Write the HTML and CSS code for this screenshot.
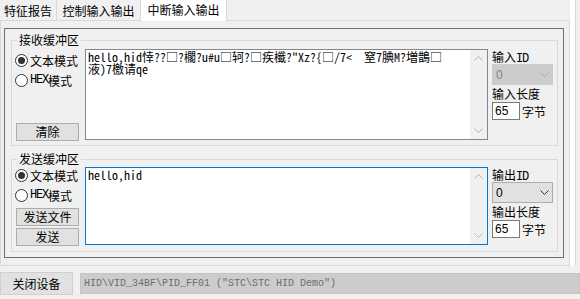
FILE: index.html
```html
<!DOCTYPE html>
<html>
<head>
<meta charset="utf-8">
<link rel="stylesheet" href="styles.css">
</head>
<body>
<div class="window">
  <div class="top">
    <div class="tabctl">
      <div class="tabs">
        <div class="tab t1">特征报告</div>
        <div class="tab t2">控制输入输出</div>
        <div class="tab active">中断输入输出</div>
        <div class="tabfill"></div>
      </div>
      <div class="page">
        <div class="frame">
          <div class="group g-recv">
            <div class="legend">接收缓冲区</div>
            <div class="leftcol">
              <div class="radio"><span class="dot checked"></span>文本模式</div>
              <div class="radio"><span class="dot"></span><span class="lat">HEX</span>模式</div>
              <div class="btn btn-bottom">清除</div>
            </div>
            <div class="textbox recv">
              <div class="text">hello,hid悻??□?櫊?u#u□轲?□疾櫼?"Xz?{□/7&lt;  窒7腆M?増鵲□
液)7檄请qe</div>
              <div class="vscroll">
                <div class="arrow"><svg width="9" height="5" viewBox="0 0 9 5"><path d="M0.5 4.5 L4.5 0.5 L8.5 4.5" fill="none" stroke="#b4b4b4" stroke-width="1"/></svg></div>
                <div class="arrow"><svg width="9" height="5" viewBox="0 0 9 5"><path d="M0.5 0.5 L4.5 4.5 L8.5 0.5" fill="none" stroke="#b4b4b4" stroke-width="1"/></svg></div>
              </div>
            </div>
            <div class="rightcol">
              <div class="lbl">输入<span class="lat">ID</span></div>
              <div class="combo disabled"><span>0</span><svg width="9" height="5" viewBox="0 0 9 5"><path d="M0.5 0.5 L4.5 4.5 L8.5 0.5" fill="none" stroke="#a8a8a8" stroke-width="1"/></svg></div>
              <div class="lbl2">输入长度</div>
              <div class="lenrow"><div class="num">65</div><span class="unit">字节</span></div>
            </div>
          </div>
          <div class="group g-send">
            <div class="legend">发送缓冲区</div>
            <div class="leftcol send-left">
              <div class="radio"><span class="dot checked"></span>文本模式</div>
              <div class="radio"><span class="dot"></span><span class="lat">HEX</span>模式</div>
              <div class="btn btn-file">发送文件</div>
              <div class="btn btn-send">发送</div>
            </div>
            <div class="textbox send">
              <div class="text">hello,hid</div>
              <div class="vscroll">
                <div class="arrow"><svg width="9" height="5" viewBox="0 0 9 5"><path d="M0.5 4.5 L4.5 0.5 L8.5 4.5" fill="none" stroke="#b4b4b4" stroke-width="1"/></svg></div>
                <div class="arrow"><svg width="9" height="5" viewBox="0 0 9 5"><path d="M0.5 0.5 L4.5 4.5 L8.5 0.5" fill="none" stroke="#b4b4b4" stroke-width="1"/></svg></div>
              </div>
            </div>
            <div class="rightcol">
              <div class="lbl">输出<span class="lat">ID</span></div>
              <div class="combo"><span>0</span><svg width="9" height="5" viewBox="0 0 9 5"><path d="M0.5 0.5 L4.5 4.5 L8.5 0.5" fill="none" stroke="#333" stroke-width="1"/></svg></div>
              <div class="lbl2">输出长度</div>
              <div class="lenrow"><div class="num">65</div><span class="unit">字节</span></div>
            </div>
          </div>
        </div>
      </div>
    </div>
    <div class="strip"><div class="strip-white"></div><div class="strip-line"></div></div>
  </div>
  <div class="bottom">
    <div class="closebtn">关闭设备</div>
    <div class="pathfield">HID\VID_34BF\PID_FF01 ("STC\STC HID Demo")</div>
  </div>
</div>
</body>
</html>
```
FILE: styles.css
```css
* { box-sizing: border-box; margin: 0; padding: 0; }
html, body { width: 580px; height: 299px; overflow: hidden; }
body {
  background: #f0f0f0;
  font-family: "Noto Sans CJK SC", "Noto Sans", sans-serif;
  font-size: 12px;
  color: #000;
}
.window { display: flex; flex-direction: column; height: 299px; }
.top { display: flex; height: 266px; }
.tabctl { width: 570px; display: flex; flex-direction: column; }
.tabs { display: flex; height: 21px; }
.tab {
  height: 21px;
  border-bottom: 1px solid #d9d9d9;
  text-align: center;
  padding-top: 2px;
  line-height: 18px;
  white-space: nowrap;
}
.t1 { width: 57px; border-right: 1px solid #d9d9d9; }
.t2 { width: 83px; }
.tab.active {
  width: 87px;
  background: #fff;
  border: 1px solid #d9d9d9;
  border-top: none;
  border-bottom: none;
  padding-top: 0;
  line-height: 19px;
}
.tabfill { flex: 1; border-bottom: 1px solid #d9d9d9; }
.page {
  height: 245px;
  border: 1px solid #d9d9d9;
  border-top: none;
  padding: 7px 0 0 3px;
}
.frame {
  width: 560px;
  height: 230px;
  border: 1px solid #6e6e6e;
  display: flex;
  flex-direction: column;
}
.group {
  position: relative;
  display: flex;
  border: 1px solid #d9d9d9;
  margin: 11px 5px 0 6px;
  padding: 8px 4px 5px 3px;
}
.g-send { margin-top: 13px; padding-top: 7px; }
.legend {
  position: absolute;
  left: 5px;
  top: -8px;
  padding: 0 2px;
  line-height: 14px;
  background: #f0f0f0;
}
.leftcol { width: 64px; display: flex; flex-direction: column; padding-top: 1px; }
.send-left { padding-top: 0; margin-top: -2px; }
.radio { display: flex; align-items: center; height: 20px; white-space: nowrap; }
.dot {
  width: 13px; height: 13px;
  border: 1px solid #333;
  border-radius: 50%;
  background: #fff;
  margin-right: 2px;
  display: flex; align-items: center; justify-content: center;
}
.dot.checked::after {
  content: "";
  width: 7px; height: 7px;
  border-radius: 50%;
  background: #333;
}
.lat { font-family: "Liberation Mono", monospace; font-size: 12px; letter-spacing: -1.2px; }
.btn {
  width: 63px; height: 18px;
  margin-left: 1px;
  background: #e1e1e1;
  border: 1px solid #adadad;
  text-align: center;
  line-height: 16px;
}
.btn-bottom { margin-top: auto; margin-bottom: -1px; }
.btn-file { margin-top: 3px; }
.btn-send { margin-top: 2px; }
.textbox {
  width: 403px;
  margin: 0 4px 0 6px;
  background: #fff;
  border: 1px solid #828790;
  display: flex;
}
.recv { height: 91px; }
.send { height: 78px; border-color: #0078d7; }
.text {
  flex: 1;
  padding: 1px 0 0 2px;
  font-family: "Noto Sans Mono CJK SC", "Liberation Mono", monospace;
  font-size: 12px;
  line-height: 12px;
  white-space: pre;
}
.vscroll {
  width: 17px;
  background: #f0f0f0;
  display: flex;
  flex-direction: column;
  justify-content: space-between;
}
.arrow { height: 17px; display: flex; align-items: center; justify-content: center; }
.rightcol { width: 61px; display: flex; flex-direction: column; }
.lbl { height: 15px; line-height: 15px; white-space: nowrap; }
.lbl2 { height: 17px; line-height: 17px; white-space: nowrap; }
.combo {
  height: 21px;
  background: #e1e1e1;
  border: 1px solid #adadad;
  display: flex;
  align-items: center;
  justify-content: space-between;
  padding: 0 3px 0 3px;
  font-family: "Liberation Sans", sans-serif;
  font-size: 12px;
}
.combo.disabled { background: #cccccc; border-color: #cccccc; color: #838383; }
.lenrow { display: flex; height: 18px; align-items: center; }
.num {
  width: 28px; height: 18px;
  background: #fff;
  border: 1px solid #7a7a7a;
  padding-left: 2px;
  line-height: 16px;
  font-family: "Liberation Sans", sans-serif;
}
.unit { margin-left: 2px; }
.strip { width: 10px; display: flex; height: 266px; }
.strip-white { width: 5px; background: #fff; }
.strip-line { width: 1px; background: #c9dcee; }
.bottom { display: flex; gap: 7px; padding-top: 6px; height: 33px; align-items: flex-start; }
.closebtn {
  width: 73px; height: 23px;
  background: #e1e1e1;
  border: 1px solid #d0d0d0;
  text-align: center;
  line-height: 21px;
}
.pathfield {
  flex: 1;
  height: 21px;
  margin-top: 1px;
  background: #cccccc;
  border: 1px solid #c4c4c4;
  padding-left: 3px;
  font-family: "Liberation Mono", monospace;
  font-size: 10px;
  line-height: 19px;
  color: #6d6d6d;
  white-space: pre;
  overflow: hidden;
}
```
